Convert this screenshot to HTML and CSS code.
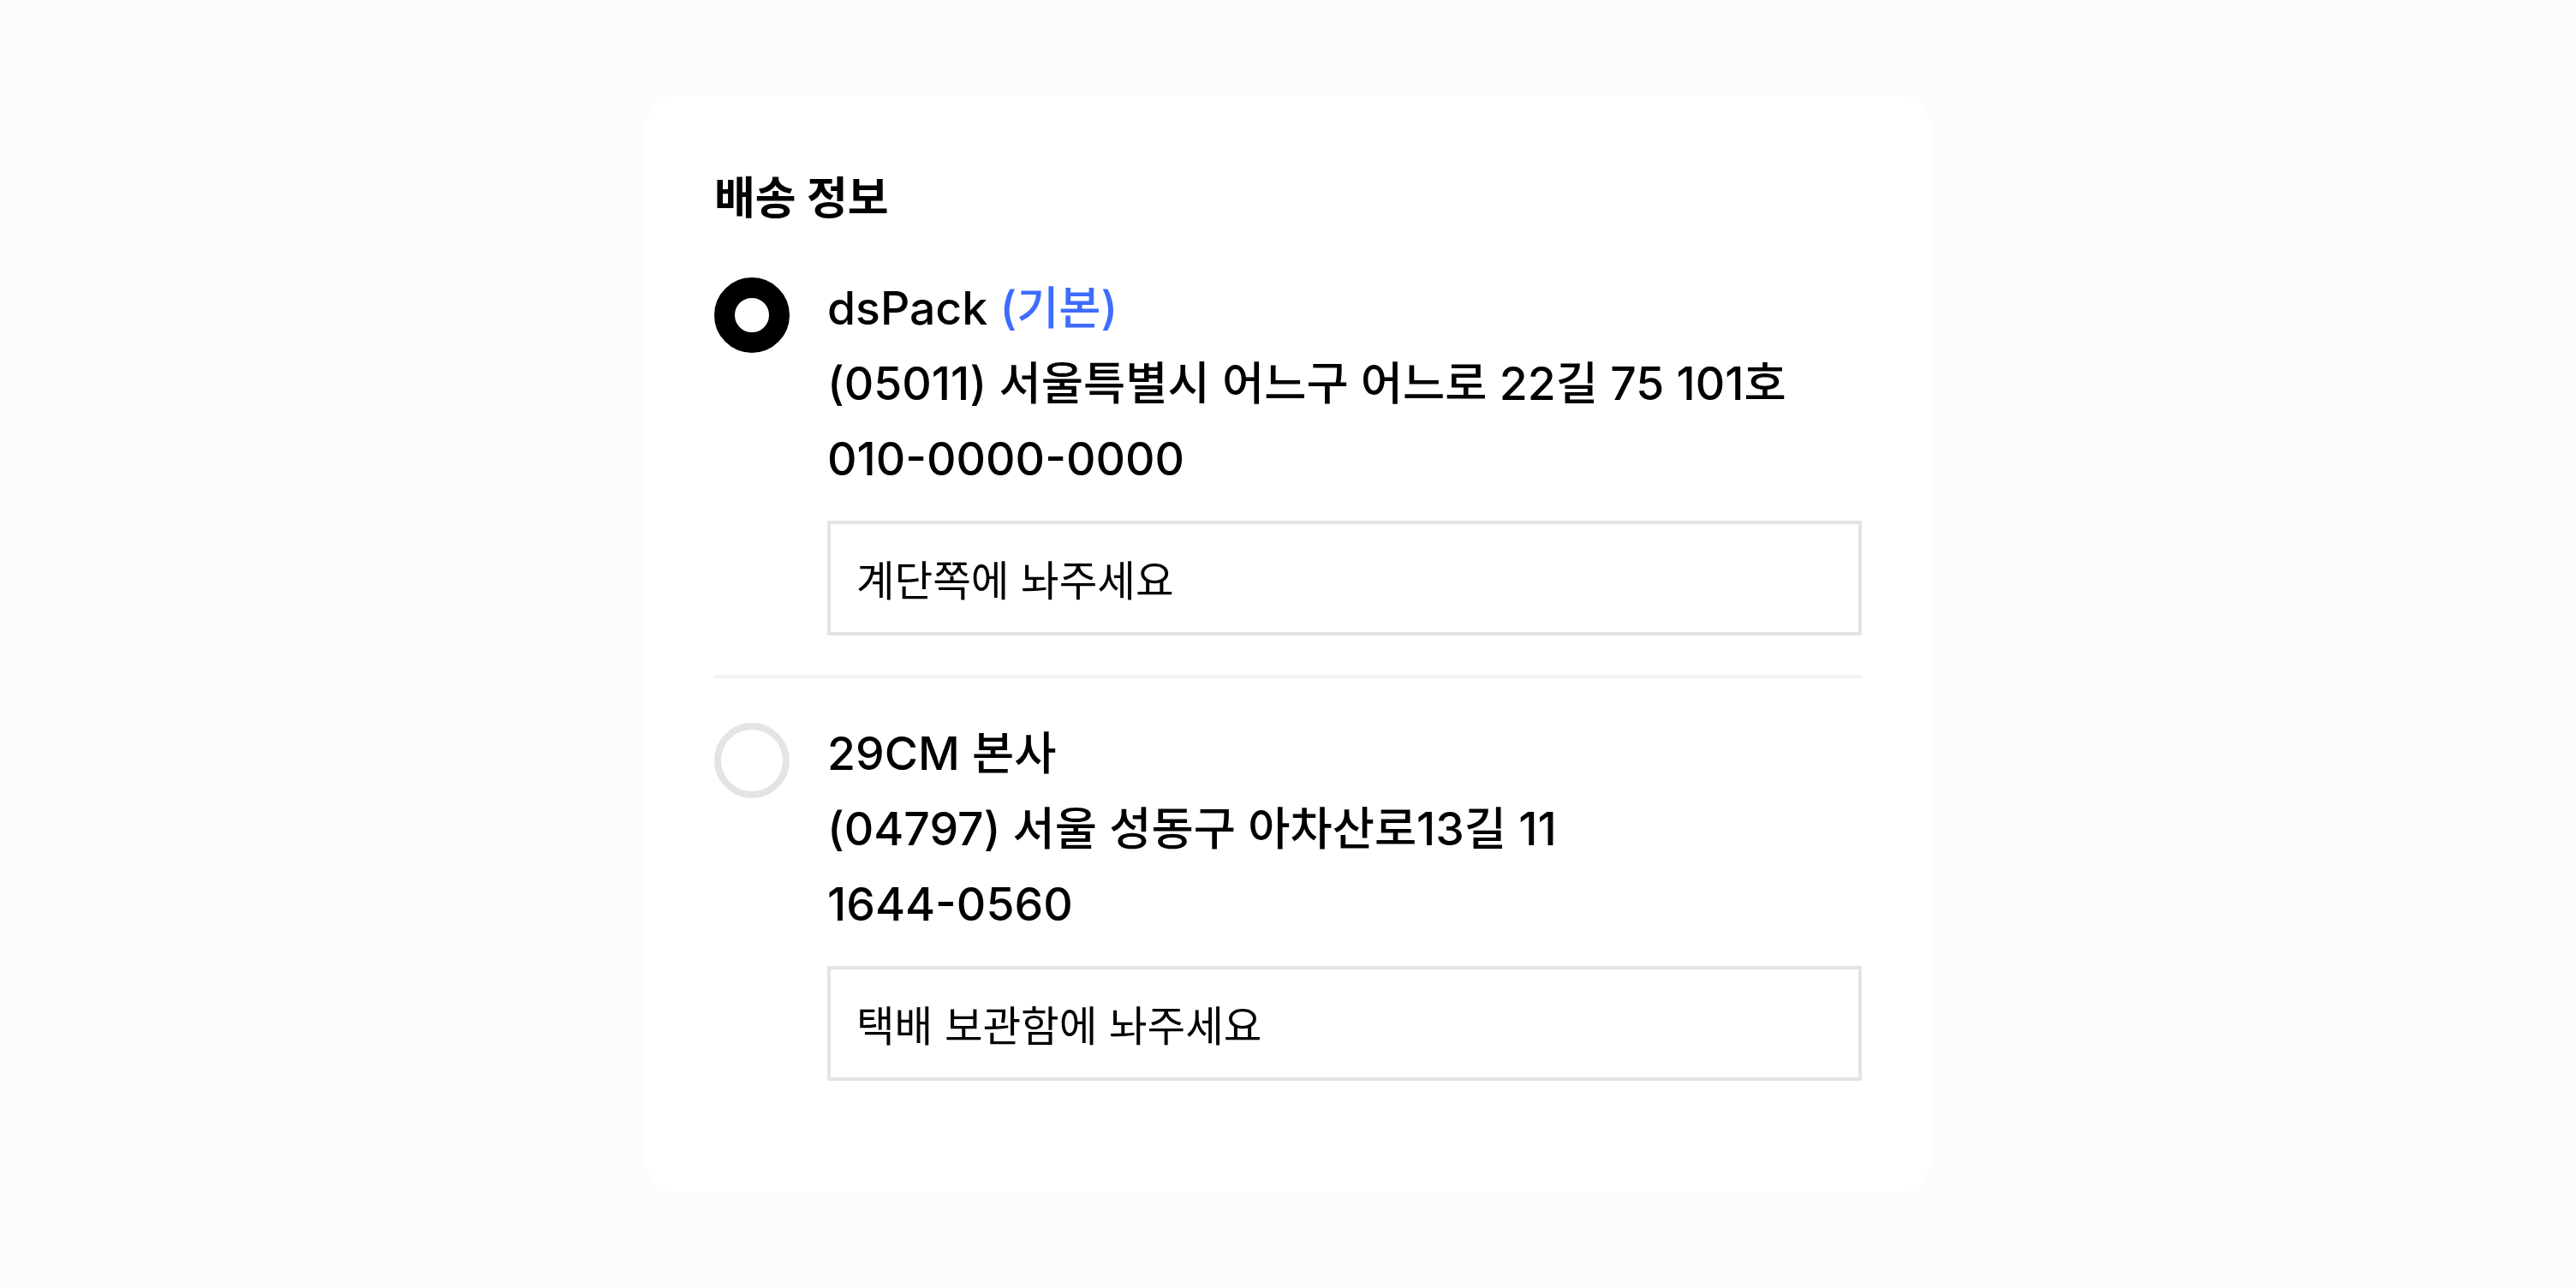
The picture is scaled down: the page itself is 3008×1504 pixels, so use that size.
FILE: index.html
```html
<!DOCTYPE html>
<html lang="ko">
<head>
<meta charset="utf-8">
<title>배송 정보</title>
<link rel="stylesheet" href="styles.css">
</head>
<body>
<main class="page">
  <section class="card">
    <h2 class="card-title">배송 정보</h2>
    <div class="item">
      <span class="radio radio-on"></span>
      <div class="info">
        <p class="line name">dsPack <span class="default">(기본)</span></p>
        <p class="line addr">(05011) 서울특별시 어느구 어느로 22길 75 101호</p>
        <p class="line phone">010-0000-0000</p>
        <div class="memo">계단쪽에 놔주세요</div>
      </div>
    </div>
    <div class="item">
      <span class="radio"></span>
      <div class="info">
        <p class="line name">29CM 본사</p>
        <p class="line addr">(04797) 서울 성동구 아차산로13길 11</p>
        <p class="line phone">1644-0560</p>
        <div class="memo">택배 보관함에 놔주세요</div>
      </div>
    </div>
  </section>
</main>
</body>
</html>
```
FILE: styles.css
```css
* { box-sizing: border-box; }
html, body {
  margin: 0;
  background: #fcfcfc;
}
body {
  font-family: Inter, "Noto Sans CJK KR", sans-serif;
  color: #000;
}
.page {
  padding-top: 112px;
  display: flex;
  justify-content: center;
}
.card {
  width: 1500px;
  background: #fff;
  border-radius: 38px;
  padding: 80px 80px 84px;
}
.card-title {
  margin: 0;
  font-size: 52px;
  line-height: 80px;
  font-weight: 700;
}
.item {
  display: flex;
  gap: 44px;
  padding: 44px 0 46px;
  border-bottom: 4px solid #f3f3f3;
}
.item:last-child { border-bottom: none; }
.radio {
  flex: none;
  width: 88px;
  height: 88px;
  margin-top: 8px;
  border-radius: 50%;
  border: 8px solid #e4e4e4;
  background: #fff;
}
.radio-on {
  border: 24px solid #000;
}
.info {
  flex: 1;
  min-width: 0;
}
.line {
  margin: 0;
  font-size: 53.5px;
  line-height: 88px;
  font-weight: 500;
}
.default { color: #3d6cff; }
.memo {
  margin-top: 28px;
  height: 134px;
  border: 4px solid #e4e4e4;
  padding: 0 30px;
  display: flex;
  align-items: center;
  font-size: 48.5px;
}
```
